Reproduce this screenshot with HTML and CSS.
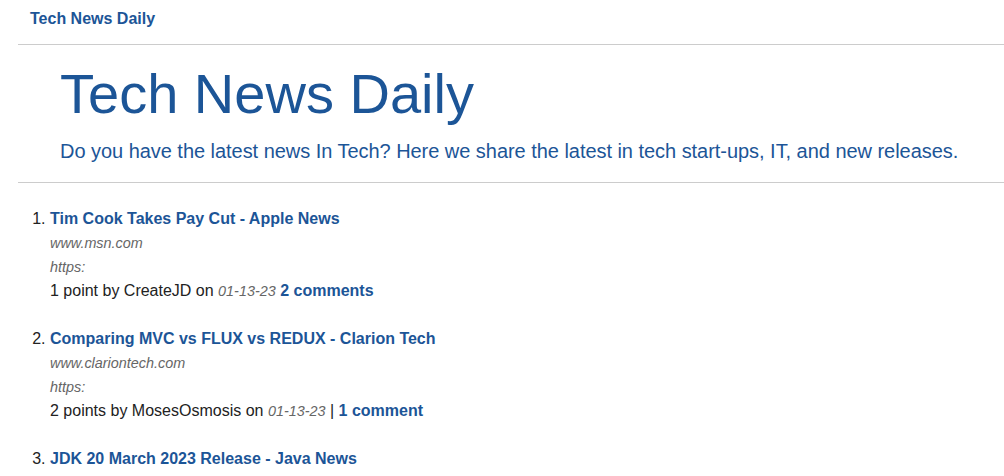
FILE: index.html
```html
<!DOCTYPE html>
<html lang="en">
<head>
<meta charset="utf-8">
<title>Tech News Daily</title>
<link rel="stylesheet" href="styles.css">
</head>
<body>
<nav class="navbar"><a class="brand" href="#">Tech News Daily</a></nav>
<hr class="rule">
<header class="hero">
  <h1 class="hero-title">Tech News Daily</h1>
  <p class="hero-lead">Do you have the latest news In Tech? Here we share the latest in tech start-ups, IT, and new releases.</p>
</header>
<hr class="rule">
<ol class="stories">
  <li class="story">
    <a class="story-title" href="#">Tim Cook Takes Pay Cut - Apple News</a>
    <div class="story-domain">www.msn.com</div>
    <div class="story-domain">https:</div>
    <div class="story-meta">1 point by CreateJD on <span class="story-date">01-13-23</span> <a class="story-comments" href="#">2 comments</a></div>
  </li>
  <li class="story">
    <a class="story-title" href="#">Comparing MVC vs FLUX vs REDUX - Clarion Tech</a>
    <div class="story-domain">www.clariontech.com</div>
    <div class="story-domain">https:</div>
    <div class="story-meta">2 points by MosesOsmosis on <span class="story-date">01-13-23</span> | <a class="story-comments" href="#">1 comment</a></div>
  </li>
  <li class="story">
    <a class="story-title" href="#">JDK 20 March 2023 Release - Java News</a>
    <div class="story-domain">www.oracle.com</div>
    <div class="story-domain">https:</div>
    <div class="story-meta">1 point by CreateJD on <span class="story-date">01-13-23</span></div>
  </li>
</ol>
</body>
</html>
```
FILE: styles.css
```css
html, body {
  margin: 0;
  padding: 0;
  background: #fff;
}
body {
  font-family: "Liberation Sans", Arial, Helvetica, sans-serif;
  color: #222;
  font-size: 16px;
}
a {
  color: #1c5597;
  text-decoration: none;
}
.navbar {
  padding: 9px 30px 15px;
  line-height: 20px;
}
.brand {
  font-weight: bold;
  font-size: 16px;
}
.rule {
  margin: 0 0 0 18px;
  border: 0;
  border-top: 1px solid #cccccc;
  height: 0;
}
.hero {
  padding: 15px 0 16px 60px;
  color: #1c5597;
}
.hero-title {
  margin: 0;
  font-size: 56px;
  font-weight: normal;
  line-height: 1.2;
}
.hero-lead {
  margin: 9px 0 0;
  font-size: 20px;
  letter-spacing: -0.04px;
  line-height: 30px;
  white-space: nowrap;
}
.stories {
  margin: 0;
  padding: 24px 0 0 50px;
  line-height: 24px;
}
.story {
  margin-bottom: 24px;
}
.story-title {
  font-weight: bold;
  font-size: 16px;
}
.story-domain {
  font-style: italic;
  font-size: 14.4px;
  color: #666;
}
.story-meta {
  font-size: 16px;
}
.story-date {
  font-style: italic;
  font-size: 14.4px;
  color: #666;
}
.story-comments {
  font-weight: bold;
}
```
